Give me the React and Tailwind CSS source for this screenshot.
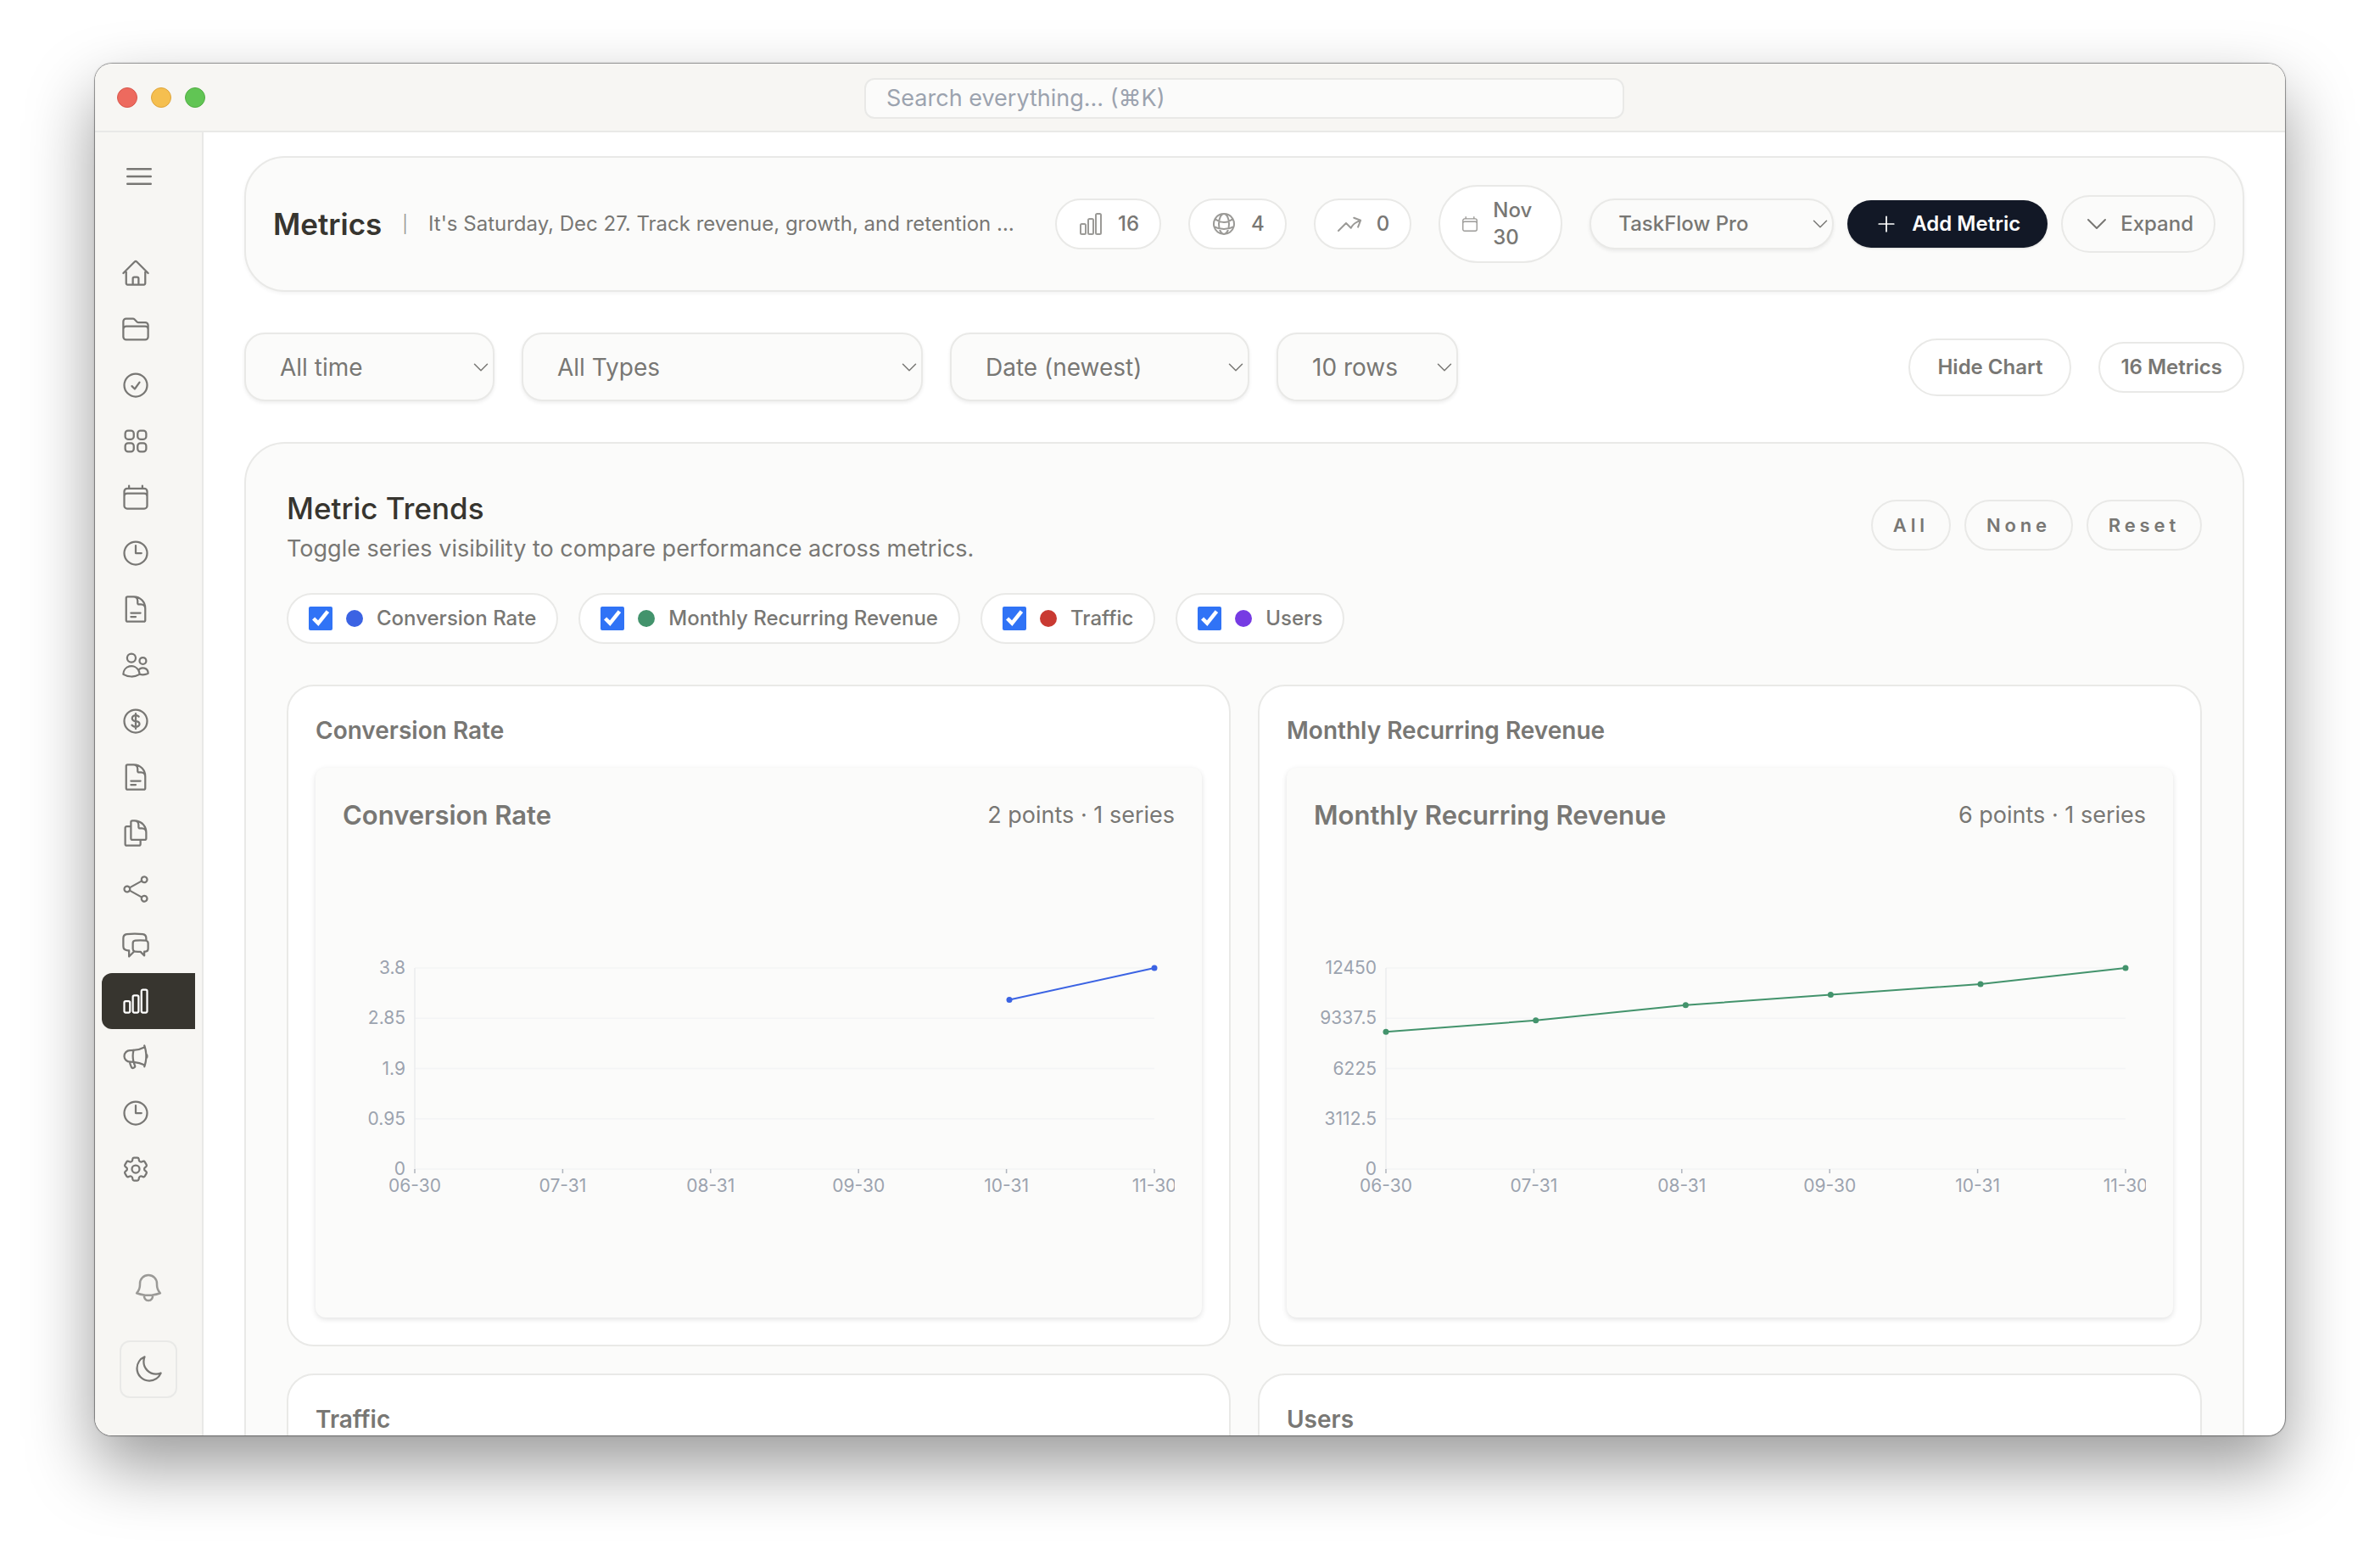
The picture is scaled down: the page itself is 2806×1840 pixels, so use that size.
import { useState } from "react";
import {
    HiOutlineArrowTrendingUp,
    HiOutlineBars3,
    HiOutlineBell,
    HiOutlineCalendar,
    HiOutlineChartBar,
    HiOutlineChatBubbleLeftRight,
    HiOutlineCheckCircle,
    HiOutlineChevronDown,
    HiOutlineClock,
    HiOutlineCog6Tooth,
    HiOutlineCurrencyDollar,
    HiOutlineDocumentDuplicate,
    HiOutlineDocumentText,
    HiOutlineFolder,
    HiOutlineGlobeAlt,
    HiOutlineHome,
    HiOutlineMegaphone,
    HiOutlineMoon,
    HiOutlinePlus,
    HiOutlineShare,
    HiOutlineSquares2X2,
    HiOutlineUsers,
} from "react-icons/hi2";

const NAV = [
    { label: "Home", icon: HiOutlineHome },
    { label: "Projects", icon: HiOutlineFolder },
    { label: "Tasks", icon: HiOutlineCheckCircle },
    { label: "Boards", icon: HiOutlineSquares2X2 },
    { label: "Calendar", icon: HiOutlineCalendar },
    { label: "Time", icon: HiOutlineClock },
    { label: "Notes", icon: HiOutlineDocumentText },
    { label: "Clients", icon: HiOutlineUsers },
    { label: "Finance", icon: HiOutlineCurrencyDollar },
    { label: "Invoices", icon: HiOutlineDocumentText },
    { label: "Templates", icon: HiOutlineDocumentDuplicate },
    { label: "Social", icon: HiOutlineShare },
    { label: "Messages", icon: HiOutlineChatBubbleLeftRight },
    { label: "Metrics", icon: HiOutlineChartBar },
    { label: "Marketing", icon: HiOutlineMegaphone },
    { label: "Activity", icon: HiOutlineClock },
    { label: "Settings", icon: HiOutlineCog6Tooth },
];

const TICKS = ["06-30", "07-31", "08-31", "09-30", "10-31", "11-30"];
const DAYS = [0, 31, 62, 92, 123, 153];

const SERIES = [
    { name: "Conversion Rate", color: "#3b63e3", dot: "bg-[#3b63e3]", values: [null, null, null, null, 3.2, 3.8] },
    { name: "Monthly Recurring Revenue", color: "#43936c", dot: "bg-[#43936c]", values: [8500, 9200, 10150, 10800, 11450, 12450] },
    { name: "Traffic", color: "#c93a32", dot: "bg-[#c93a32]", values: [null, null, 8200, 9400, 11200, 12800] },
    { name: "Users", color: "#763be3", dot: "bg-[#763be3]", values: [null, null, 310, 352, 401, 460] },
];

function TitleBar() {
    return (
        <header className="flex h-[81px] shrink-0 items-center border-b-2 border-[#e9e9e7] bg-[#f7f6f3]">
            <div className="flex w-32 shrink-0 gap-4 pl-[26px] *:shrink-0">
                <span className="size-6 rounded-full border border-[#d8574c] bg-[#ed6a5e]" />
                <span className="size-6 rounded-full border border-[#dfa53c] bg-[#f5bf4f]" />
                <span className="size-6 rounded-full border border-[#51ad43] bg-[#61c554]" />
            </div>
            <div className="flex flex-1 justify-center pt-0.5">
                <input
                    type="search"
                    aria-label="Search"
                    placeholder="Search everything... (⌘K)"
                    className="h-12 w-full max-w-[896px] rounded-xl border-2 border-[#e9e9e7] bg-[#fbfbfa] px-6 text-[27px] text-[#37352f] placeholder:text-[#9ca3af]"
                />
            </div>
        </header>
    );
}

function Sidebar() {
    return (
        <aside className="flex w-[128px] shrink-0 flex-col border-r-2 border-[#e9e9e7] bg-[#f7f6f3] text-[#787774]">
            <button aria-label="Toggle menu" className="mt-8 ml-8 w-fit">
                <HiOutlineBars3 className="size-10" />
            </button>
            <nav className="mt-[61px] pr-2 pl-2">
                {NAV.map(({ label, icon: Icon }) => (
                    <a
                        key={label}
                        href="#"
                        aria-label={label}
                        className={
                            label === "Metrics"
                                ? "flex h-[66px] items-center rounded-l-xl bg-[#37352f] pl-[22px] text-white"
                                : "flex h-[66px] items-center rounded-l-xl pl-[22px]"
                        }
                    >
                        <Icon className="size-9" />
                    </a>
                ))}
            </nav>
            <div className="mt-auto flex flex-col items-center gap-[42px] pb-11">
                <button aria-label="Notifications" className="text-[#9b9a97]">
                    <HiOutlineBell className="size-10" />
                </button>
                <button
                    aria-label="Toggle theme"
                    className="flex size-[68px] items-center justify-center rounded-xl border-2 border-[#e9e9e7]"
                >
                    <HiOutlineMoon className="size-9" />
                </button>
            </div>
        </aside>
    );
}

function Stat({ icon: Icon, small, children }) {
    return (
        <div className="flex shrink-0 items-center gap-4 rounded-full border-2 border-[#e9e9e7] bg-white px-6 py-3 text-2xl font-medium text-[#787774]">
            <Icon className={small ? "size-[22px] shrink-0 text-[#9b9a97]" : "size-8 shrink-0 text-[#9b9a97]"} />
            <span className={small ? "w-14 leading-8" : "leading-8"}>{children}</span>
        </div>
    );
}

function Select({ label, options, className }) {
    return (
        <div className="relative shrink-0">
            <select
                aria-label={label}
                className={`appearance-none border-2 border-[#e9e9e7] bg-[#fbfbfa] text-[#787774] shadow-[0_2px_4px_rgba(0,0,0,0.07)] ${className}`}
            >
                {options.map((o) => (
                    <option key={o}>{o}</option>
                ))}
            </select>
            <HiOutlineChevronDown className="pointer-events-none absolute inset-y-0 right-1 my-auto size-6 text-[#787774]" />
        </div>
    );
}

function PageHeader() {
    return (
        <section className="flex h-40 items-center rounded-[48px] border-2 border-[#e9e9e7] bg-[#fbfbfa] px-8 shadow-[0_2px_4px_rgba(0,0,0,0.05)]">
            <h1 className="text-[35px] font-semibold text-[#37352f]">Metrics</h1>
            <span className="ml-6 text-xl text-[#9b9a97]">|</span>
            <p className="ml-6 min-w-0 flex-1 truncate text-2xl text-[#787774]">
                It's Saturday, Dec 27. Track revenue, growth, and retention in one place.
            </p>
            <div className="ml-12 flex shrink-0 items-center gap-8">
                <Stat icon={HiOutlineChartBar}>16</Stat>
                <Stat icon={HiOutlineGlobeAlt}>4</Stat>
                <Stat icon={HiOutlineArrowTrendingUp}>0</Stat>
                <Stat icon={HiOutlineCalendar} small>Nov 30</Stat>
                <div className="flex items-center gap-4">
                    <Select
                        label="Project"
                        options={["TaskFlow Pro"]}
                        className="h-[60px] w-72 rounded-full px-8 text-2xl font-medium"
                    />
                    <button className="flex h-14 items-center gap-4 rounded-full bg-[#121826] px-8 text-2xl font-semibold text-white shadow-sm">
                        <HiOutlinePlus className="size-7" />
                        Add Metric
                    </button>
                    <button className="flex h-[68px] items-center gap-3 rounded-full border-2 border-[#e9e9e7] px-6 text-2xl font-medium text-[#787774]">
                        <HiOutlineChevronDown className="size-8" />
                        Expand
                    </button>
                </div>
            </div>
        </section>
    );
}

function Filters({ showChart, onToggle }) {
    return (
        <section className="flex items-center gap-8">
            <Select
                label="Period"
                options={["All time", "Last 30 days", "Last 90 days"]}
                className="block h-[81px] w-[295px] rounded-3xl px-10 text-[28px]"
            />
            <Select
                label="Type"
                options={["All Types", ...SERIES.map((s) => s.name)]}
                className="block h-[81px] w-[473px] rounded-3xl px-10 text-[28px]"
            />
            <Select
                label="Sort"
                options={["Date (newest)", "Date (oldest)"]}
                className="block h-[81px] w-[353px] rounded-3xl px-10 text-[28px]"
            />
            <Select
                label="Rows per page"
                options={["10 rows", "25 rows", "50 rows"]}
                className="block h-[81px] w-[214px] rounded-3xl px-10 text-[28px]"
            />
            <button
                onClick={onToggle}
                className="ml-auto h-[68px] rounded-full border-2 border-[#e9e9e7] bg-white px-8 text-2xl font-semibold text-[#787774]"
            >
                {showChart ? "Hide Chart" : "Show Chart"}
            </button>
            <span className="rounded-full border-2 border-[#e9e9e7] bg-white px-6 py-3 text-2xl leading-8 font-semibold text-[#787774]">
                16 Metrics
            </span>
        </section>
    );
}

// Plot area inside the 981x512 chart viewBox
const LEFT = 85;
const RIGHT = 957;
const TOP = 132;
const BOTTOM = 369;

function LineChart({ color, values }) {
    const max = Math.max(...values);
    const points = values
        .map((v, i) => ({ v, x: LEFT + ((RIGHT - LEFT) * DAYS[i]) / 153 }))
        .filter((p) => p.v !== null)
        .map((p) => ({ x: p.x, y: BOTTOM - ((BOTTOM - TOP) * p.v) / max }));

    return (
        <svg viewBox="0 0 981 512" className="mt-6 block w-full overflow-hidden" role="img">
            {[1, 0.75, 0.5, 0.25, 0].map((f) => {
                const y = BOTTOM - (BOTTOM - TOP) * f;
                return (
                    <g key={f}>
                        <line x1={LEFT} x2={RIGHT} y1={y} y2={y} stroke="#f3f4f5" strokeWidth="1.5" />
                        <text x={LEFT - 11} y={y + 7} textAnchor="end" fontSize="21" fill="#9ca3af">
                            {Number((max * f).toFixed(2))}
                        </text>
                    </g>
                );
            })}
            <line x1={LEFT} x2={LEFT} y1={TOP} y2={BOTTOM} stroke="#ebecee" strokeWidth="1.5" />
            {TICKS.map((t, i) => {
                const x = LEFT + ((RIGHT - LEFT) * i) / 5;
                return (
                    <g key={t}>
                        <line x1={x} x2={x} y1={BOTTOM} y2={BOTTOM + 5} stroke="#b0b5bd" strokeWidth="1.5" />
                        <text x={x} y={BOTTOM + 27} textAnchor="middle" fontSize="21" fill="#9ca3af">
                            {t}
                        </text>
                    </g>
                );
            })}
            <polyline points={points.map((p) => `${p.x},${p.y}`).join(" ")} fill="none" stroke={color} strokeWidth="2" />
            {points.map((p) => (
                <circle key={p.x} cx={p.x} cy={p.y} r="3.5" fill={color} />
            ))}
        </svg>
    );
}

function ChartCard({ series }) {
    const count = series.values.filter((v) => v !== null).length;
    return (
        <article className="rounded-[32px] border-2 border-[#e9e9e7] bg-white p-8">
            <h3 className="text-[28px] leading-10 font-semibold text-[#787774]">{series.name}</h3>
            <div className="mt-6 rounded-xl bg-[#fbfbfa] p-8 shadow-[0_2px_6px_rgba(0,0,0,0.12)]">
                <div className="flex items-center justify-between text-[#787774]">
                    <h4 className="text-[31px] leading-[48px] font-semibold">{series.name}</h4>
                    <span className="text-[27px] leading-10">{count} points · 1 series</span>
                </div>
                <LineChart color={series.color} values={series.values} />
            </div>
        </article>
    );
}

function Trends() {
    const all = SERIES.map((s) => s.name);
    const [visible, setVisible] = useState(all);

    const toggle = (name) =>
        setVisible((v) => (v.includes(name) ? v.filter((n) => n !== name) : [...v, name]));

    const actions = [
        { label: "All", next: all },
        { label: "None", next: [] },
        { label: "Reset", next: all },
    ];

    return (
        <section className="rounded-[48px] border-2 border-[#e9e9e7] bg-[#fbfbfa] p-12">
            <div className="flex items-center justify-between">
                <div>
                    <h2 className="text-[35px] leading-[56px] font-medium text-[#37352f]">Metric Trends</h2>
                    <p className="text-[27px] leading-10 text-[#787774]">
                        Toggle series visibility to compare performance across metrics.
                    </p>
                </div>
                <div className="flex gap-4">
                    {actions.map((a) => (
                        <button
                            key={a.label}
                            onClick={() => setVisible(a.next)}
                            className="h-[60px] rounded-full border-2 border-[#e9e9e7] px-6 text-[22px] font-semibold tracking-[0.22em] text-[#787774]"
                        >
                            {a.label}
                        </button>
                    ))}
                </div>
            </div>

            {/* Series toggles */}
            <div className="mt-8 flex flex-wrap gap-6">
                {SERIES.map((s) => (
                    <label
                        key={s.name}
                        className="flex h-[60px] items-center gap-4 rounded-full border-2 border-[#e9e9e7] bg-white px-6 text-2xl font-medium text-[#787774]"
                    >
                        <input
                            type="checkbox"
                            checked={visible.includes(s.name)}
                            onChange={() => toggle(s.name)}
                            className="size-7 accent-[#3073f6]"
                        />
                        <span className={`size-5 rounded-full ${s.dot}`} />
                        {s.name}
                    </label>
                ))}
            </div>

            <div className="mt-12 grid grid-cols-2 gap-8">
                {SERIES.filter((s) => visible.includes(s.name)).map((s) => (
                    <ChartCard key={s.name} series={s} />
                ))}
            </div>
        </section>
    );
}

export default function App() {
    const [showChart, setShowChart] = useState(true);

    return (
        <div className="flex h-screen bg-white px-28 pt-[75px] pb-[148px] font-[Inter,sans-serif]">
            <div className="flex min-w-0 flex-1 flex-col overflow-hidden rounded-[20px] bg-white shadow-[0_0_0_1px_rgba(0,0,0,0.3),0_0_3px_rgba(0,0,0,0.3),0_36px_80px_rgba(0,0,0,0.4)]">
                <TitleBar />
                <div className="flex min-h-0 flex-1">
                    <Sidebar />
                    <main className="flex min-w-0 flex-1 flex-col gap-12 overflow-y-auto px-12 pt-7 [scrollbar-width:none] *:shrink-0">
                        <PageHeader />
                        <Filters showChart={showChart} onToggle={() => setShowChart(!showChart)} />
                        {showChart && <Trends />}
                    </main>
                </div>
            </div>
        </div>
    );
}
